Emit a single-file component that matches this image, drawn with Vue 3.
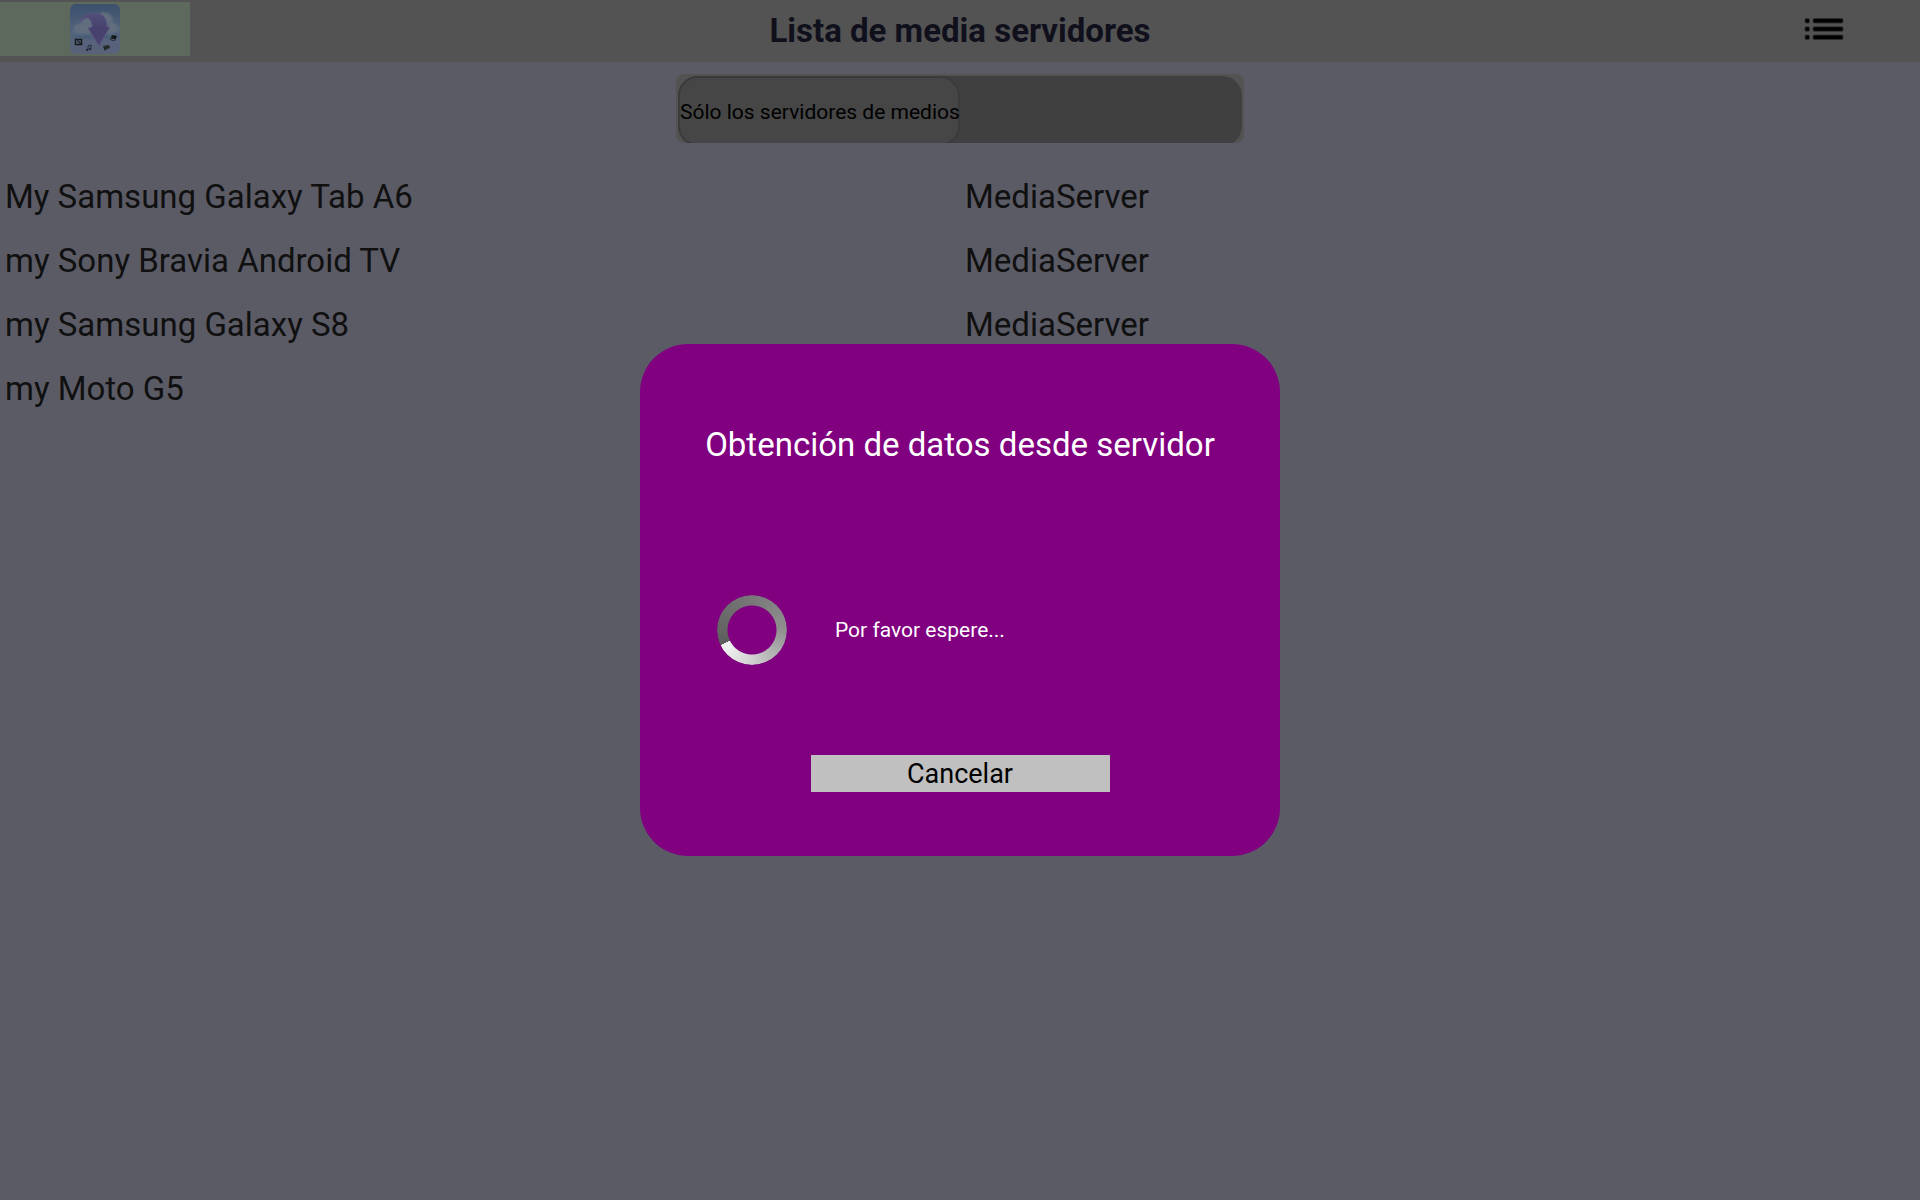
<script setup>
const servers = [
  { name: 'My Samsung Galaxy Tab A6', type: 'MediaServer' },
  { name: 'my Sony Bravia Android TV', type: 'MediaServer' },
  { name: 'my Samsung Galaxy S8', type: 'MediaServer' },
  { name: 'my Moto G5', type: '' },
]
</script>

<template>
  <div class="page">
    <header class="bar">
      <div class="brand">
        <svg class="logo" viewBox="0 0 50 50" aria-hidden="true">
          <defs>
            <linearGradient id="sky" x1="0" y1="0" x2="0" y2="1">
              <stop offset="0" stop-color="#3b506d" />
              <stop offset="0.45" stop-color="#4e6179" />
              <stop offset="0.75" stop-color="#56637a" />
              <stop offset="1" stop-color="#59627a" />
            </linearGradient>
            <linearGradient id="cloud" x1="0" y1="0" x2="0" y2="1">
              <stop offset="0" stop-color="#66717e" />
              <stop offset="0.6" stop-color="#5c6b7f" />
              <stop offset="1" stop-color="#3a5673" />
            </linearGradient>
            <linearGradient id="arrow" x1="0" y1="0" x2="0" y2="1">
              <stop offset="0" stop-color="#51507a" />
              <stop offset="0.5" stop-color="#45406d" />
              <stop offset="1" stop-color="#4c4572" />
            </linearGradient>
            <filter id="soft"><feGaussianBlur stdDeviation="0.9" /></filter>
          </defs>
          <rect width="50" height="50" rx="6" fill="url(#sky)" />
          <g fill="url(#cloud)" filter="url(#soft)">
            <circle cx="10" cy="27" r="7" />
            <circle cx="18" cy="23" r="9" />
            <circle cx="34" cy="18" r="9.500" />
            <circle cx="43" cy="26" r="6.500" />
            <rect x="8" y="23" width="36" height="11" rx="5" />
          </g>
          <path
            d="M10 19 C11 11 19 8 27 9 C34 10 37 15 37 23 L40 23 L29 42 L18 24 L22 23 C22 17 19 13 15 14 C13 15 11 17 10 19 Z"
            fill="url(#arrow)" stroke="#5c597f" stroke-width="0.800" stroke-linejoin="round"
          />
          <rect x="5.500" y="35.500" width="6" height="5" fill="#59627a" stroke="#161a1c" stroke-width="1.500" />
          <path d="M7 37h2v2h2" stroke="#161a1c" fill="none" />
          <path d="M18 46v-4l3-1v4" stroke="#252b38" fill="none" />
          <circle cx="17" cy="46" r="1.200" fill="#252b38" />
          <circle cx="20" cy="45" r="1.200" fill="#252b38" />
          <path d="M33 42l6-1 1 3-3 1-2 2-1-2z" fill="#242a27" />
          <path d="M42 31l5 1-2 5-5-1z" fill="#14181b" />
          <path d="M41 35l4 1" stroke="#59627a" />
        </svg>
      </div>
      <h1 class="heading">Lista de media servidores</h1>
      <div class="actions">
        <button class="menu" type="button" aria-label="Menú">
          <svg viewBox="0 0 40 24" width="40" height="24" aria-hidden="true">
            <g v-for="y in [2, 10.3, 18.6]" :key="y">
              <rect x="0.500" :y="y - 1" width="5.500" height="5.500" rx="2" opacity="0.450" />
              <rect x="1.500" :y="y" width="3.500" height="3.500" rx="1" />
              <rect x="8.500" :y="y - 1" width="31" height="5.500" rx="2" opacity="0.450" />
              <rect x="9.500" :y="y" width="29" height="3.500" rx="1" />
            </g>
          </svg>
        </button>
      </div>
    </header>

    <main>
      <button class="switch" type="button" role="switch" aria-checked="false">
        <span class="track">
          <span class="thumb">Sólo los servidores de medios</span>
        </span>
      </button>

      <table class="servers">
        <tbody>
          <tr v-for="server in servers" :key="server.name">
            <td>{{ server.name }}</td>
            <td>{{ server.type }}</td>
          </tr>
        </tbody>
      </table>
    </main>

    <div class="overlay">
      <section class="dialog" role="dialog" aria-modal="true" aria-labelledby="dialog-title">
        <h2 id="dialog-title">Obtención de datos desde servidor</h2>
        <div class="progress" role="status">
          <span class="spinner"></span>
          <span>Por favor espere...</span>
        </div>
        <button class="cancel" type="button">Cancelar</button>
      </section>
    </div>
  </div>
</template>

<style>
body {
  margin: 0;
  background: #5b5b66;
}
</style>

<style scoped>
.page {
  min-height: 100vh;
  background: #5b5b66;
  color: #101010;
  font-family: Roboto, "Liberation Sans", sans-serif;
}

button {
  border: 0;
  padding: 0;
  font-family: inherit;
}

.bar {
  display: grid;
  grid-template-columns: 1fr auto 1fr;
  height: 62px;
  background: #535353;
}

.brand {
  display: flex;
  justify-content: center;
  align-items: center;
  width: 190px;
  height: 54px;
  margin-top: 2px;
  background: #5c695c;
}

.logo {
  width: 50px;
  height: 50px;
}

.heading {
  margin: 0;
  color: #10101c;
  font-size: 33px;
  line-height: 62px;
  font-weight: 700;
}

.actions {
  display: flex;
  justify-content: flex-end;
  align-items: flex-start;
  padding: 17px 76px 0 0;
}

.menu {
  display: block;
  height: 24px;
  background: none;
}

.menu svg {
  display: block;
}

.switch {
  display: block;
  width: 568px;
  height: 69px;
  margin: 12px auto 22px;
  padding: 2px 2px 0;
  overflow: hidden;
  border-radius: 8px;
  background: #535353;
}

.track {
  display: block;
  height: 70px;
  border-radius: 20px;
  background: #404040;
}

.thumb {
  display: block;
  box-sizing: border-box;
  width: 50%;
  height: 70px;
  border: 2px solid #3b3b3b;
  border-radius: 20px;
  background: #464646;
  color: #000;
  font-size: 21px;
  line-height: 68px;
  white-space: nowrap;
}

.servers {
  width: 100%;
  table-layout: fixed;
  border-collapse: collapse;
}

.servers td {
  height: 64px;
  padding: 0 5px;
  font-size: 33px;
  line-height: 64px;
}

.overlay {
  position: fixed;
  inset: 0;
  display: grid;
  place-items: center;
}

.dialog {
  display: flex;
  flex-direction: column;
  align-items: center;
  justify-content: space-between;
  box-sizing: border-box;
  width: 640px;
  height: 512px;
  padding: 81px 64px 64px;
  border-radius: 48px;
  background: #800080;
  color: #fff;
}

.dialog h2 {
  margin: 0;
  font-size: 33px;
  line-height: 40px;
  font-weight: 400;
  white-space: nowrap;
}

.progress {
  display: flex;
  align-items: center;
  align-self: stretch;
  gap: 48px;
  padding: 40px 13px 0;
  font-size: 21px;
}

.spinner {
  box-sizing: border-box;
  width: 70px;
  height: 70px;
  border-radius: 50%;
  background: conic-gradient(from 244deg, #5c5c5c, #646464 26deg, #787878 116deg, #909090 206deg, #d0d0d0 296deg, #f0f0f0 350deg, #f0f0f0);
  mask: radial-gradient(circle, transparent 24px, #000 25px);
}

.cancel {
  width: 299px;
  height: 37px;
  padding-top: 2px;
  background: #c0c0c0;
  color: #000;
  font-size: 27px;
  line-height: 35px;
}
</style>
